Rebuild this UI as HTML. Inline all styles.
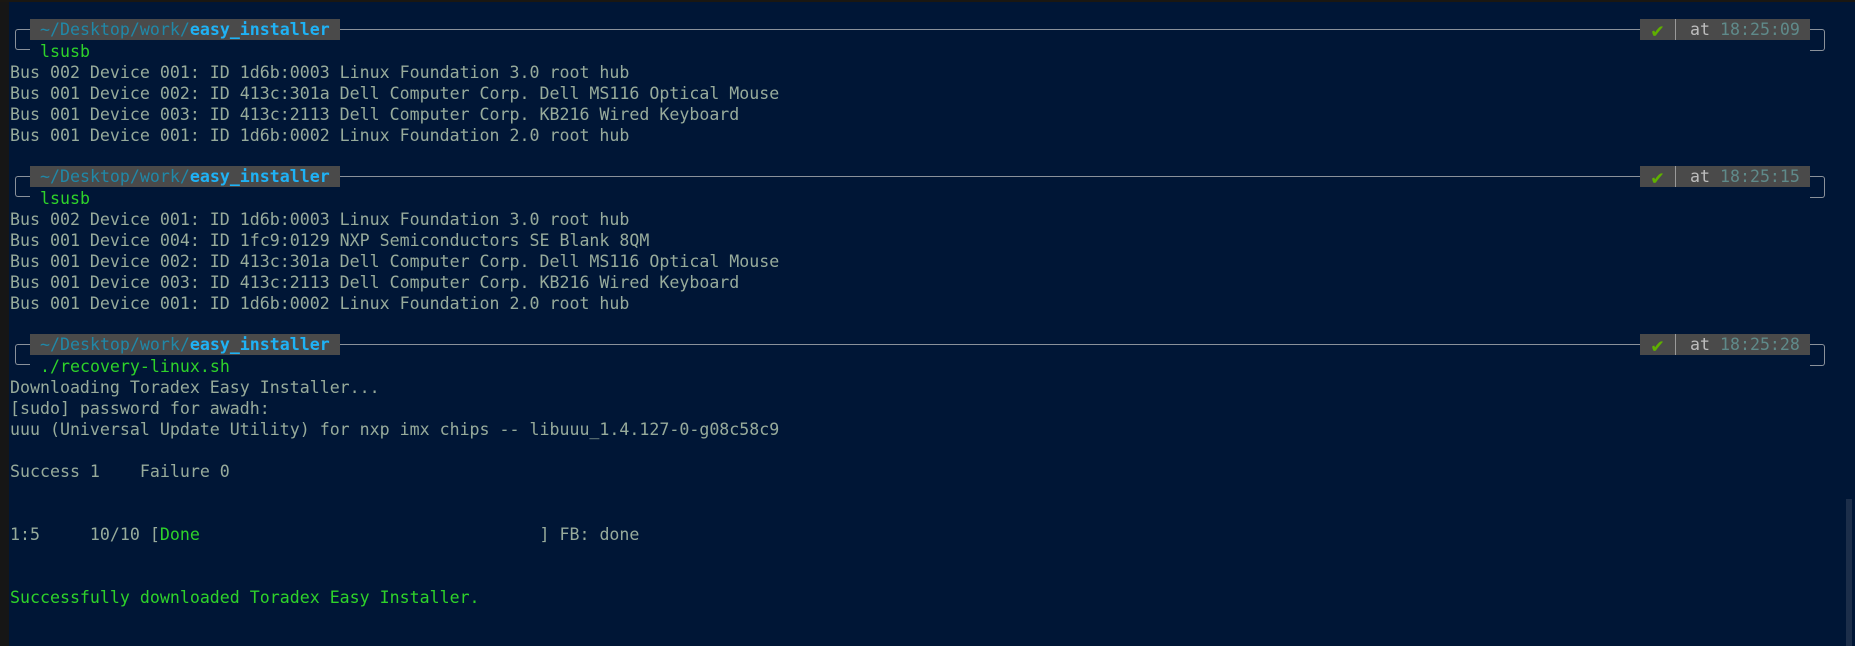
<!DOCTYPE html>
<html><head><meta charset="utf-8"><style>
html,body{margin:0;padding:0;}
body{width:1855px;height:646px;background:#001636;position:relative;overflow:hidden;font-family:"DejaVu Sans Mono","Liberation Mono",monospace;font-size:16.6px;color:#97ab9b;}
.strip{position:absolute;left:0;top:0;width:9px;height:646px;background:#161616;}
.topl{position:absolute;left:0;top:0;width:1855px;height:2px;background:#1a1712;}
.row{position:absolute;left:10px;height:21px;line-height:23px;white-space:pre;}
.g{color:#2ed22a;}
.pbox{position:absolute;left:30px;height:21px;line-height:22px;background:#4a4a4a;padding:0 10px;white-space:pre;color:#2088a8;}
.pbox b{color:#1fb2f5;font-weight:bold;}
.hl{position:absolute;height:1px;background:#8a919a;}
.lb{position:absolute;left:15px;width:15px;height:21px;border:1px solid #8a919a;border-right:none;border-radius:3px 0 0 3px;box-sizing:border-box;}
.rb{position:absolute;left:1810px;width:15px;height:22px;border:1px solid #8a919a;border-left:none;border-radius:0 3px 3px 0;box-sizing:border-box;}
.sbox{position:absolute;left:1640px;width:170px;height:21px;line-height:22px;background:#4a4a4a;white-space:pre;}
.sbox .ck{position:absolute;left:0;width:35px;text-align:center;color:#5fb000;font-size:20px;}
.sbox .sep{position:absolute;left:35px;top:0;width:1px;height:21px;background:#9a9a9a;}
.sbox .t{position:absolute;left:50px;color:#bdbdbd;}
.sbox .t span{color:#5f8a8a;}
.sb{position:absolute;left:1846px;top:499px;width:6px;height:147px;background:#1c2e4a;}
</style></head><body>
<div class="strip"></div><div class="topl"></div>

<div class="hl" style="left:340px;width:1300px;top:29px"></div>
<div class="lb" style="top:29px"></div>
<div class="rb" style="top:29px"></div>
<div class="pbox" style="top:19px">~/Desktop/work/<b>easy_installer</b></div>
<div class="sbox" style="top:19px"><span class="ck">✔</span><span class="sep"></span><span class="t">at <span>18:25:09</span></span></div>
<div class="row g" style="top:40px;left:40px">lsusb</div>
<div class="row" style="top:61px">Bus 002 Device 001: ID 1d6b:0003 Linux Foundation 3.0 root hub</div>
<div class="row" style="top:82px">Bus 001 Device 002: ID 413c:301a Dell Computer Corp. Dell MS116 Optical Mouse</div>
<div class="row" style="top:103px">Bus 001 Device 003: ID 413c:2113 Dell Computer Corp. KB216 Wired Keyboard</div>
<div class="row" style="top:124px">Bus 001 Device 001: ID 1d6b:0002 Linux Foundation 2.0 root hub</div>

<div class="hl" style="left:340px;width:1300px;top:176px"></div>
<div class="lb" style="top:176px"></div>
<div class="rb" style="top:176px"></div>
<div class="pbox" style="top:166px">~/Desktop/work/<b>easy_installer</b></div>
<div class="sbox" style="top:166px"><span class="ck">✔</span><span class="sep"></span><span class="t">at <span>18:25:15</span></span></div>
<div class="row g" style="top:187px;left:40px">lsusb</div>
<div class="row" style="top:208px">Bus 002 Device 001: ID 1d6b:0003 Linux Foundation 3.0 root hub</div>
<div class="row" style="top:229px">Bus 001 Device 004: ID 1fc9:0129 NXP Semiconductors SE Blank 8QM</div>
<div class="row" style="top:250px">Bus 001 Device 002: ID 413c:301a Dell Computer Corp. Dell MS116 Optical Mouse</div>
<div class="row" style="top:271px">Bus 001 Device 003: ID 413c:2113 Dell Computer Corp. KB216 Wired Keyboard</div>
<div class="row" style="top:292px">Bus 001 Device 001: ID 1d6b:0002 Linux Foundation 2.0 root hub</div>

<div class="hl" style="left:340px;width:1300px;top:344px"></div>
<div class="lb" style="top:344px"></div>
<div class="rb" style="top:344px"></div>
<div class="pbox" style="top:334px">~/Desktop/work/<b>easy_installer</b></div>
<div class="sbox" style="top:334px"><span class="ck">✔</span><span class="sep"></span><span class="t">at <span>18:25:28</span></span></div>
<div class="row g" style="top:355px;left:40px">./recovery-linux.sh</div>
<div class="row" style="top:376px">Downloading Toradex Easy Installer...</div>
<div class="row" style="top:397px">[sudo] password for awadh:</div>
<div class="row" style="top:418px">uuu (Universal Update Utility) for nxp imx chips -- libuuu_1.4.127-0-g08c58c9</div>
<div class="row" style="top:460px">Success 1    Failure 0</div>
<div class="row" style="top:523px">1:5     10/10 [<span class="g">Done</span>                                  ] FB: done</div>
<div class="row g" style="top:586px">Successfully downloaded Toradex Easy Installer.</div>

<div class="sb"></div>
</body></html>
